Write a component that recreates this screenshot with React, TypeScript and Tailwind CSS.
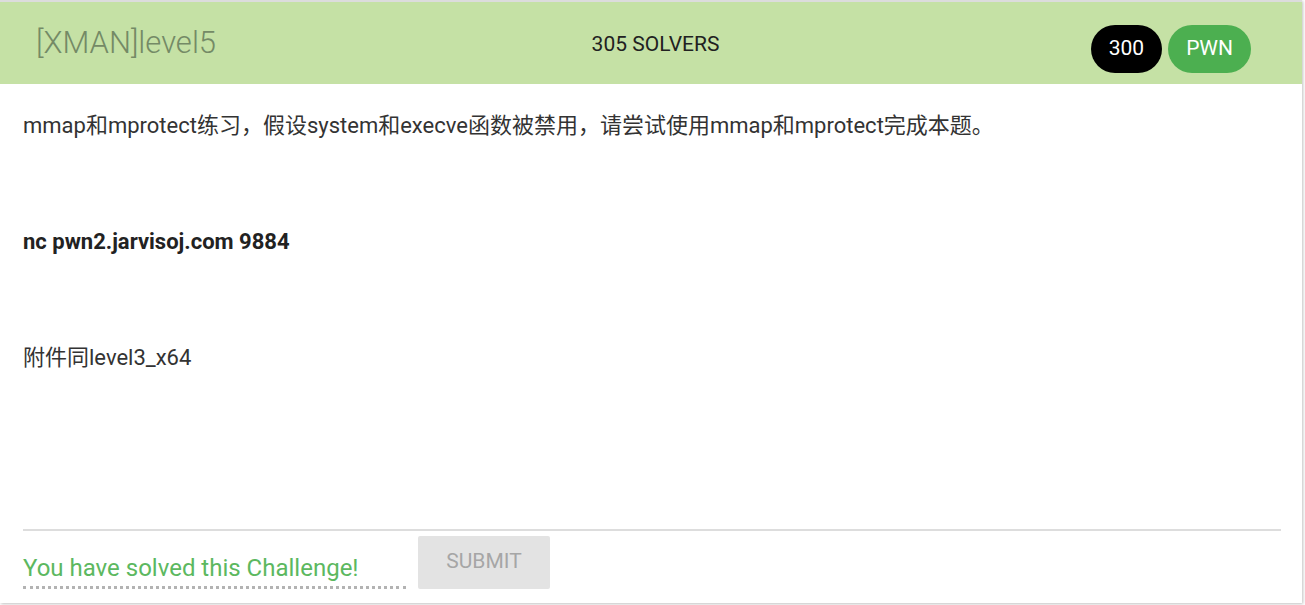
import React from 'react'

const font = { fontFamily: 'Roboto, "Noto Sans CJK SC", sans-serif' }

const App = () => {
  return (
    <div className="w-[1305px] h-[605px] bg-white" style={font}>
      <div className="w-[1302px] h-[603px] flex flex-col bg-white border-t-2 border-[#dcdcdc] shadow-[1px_1px_3px_rgba(0,0,0,0.25)]">
        <div className="h-[82px] flex items-center bg-[#c5e1a5] pl-[36px] pr-[51px]">
          <h1 className="flex-1 text-[31px] font-light text-[#748a66]">[XMAN]level5</h1>
          <div className="flex-1 text-center text-[21px] text-[#212121] pl-[24px] pt-[3px]">305 SOLVERS</div>
          <div className="flex-1 flex justify-end gap-[6px] mt-[12px]">
            <span className="h-[48px] px-[18px] flex items-center rounded-full bg-black text-white text-[21px]">300</span>
            <span className="h-[48px] px-[18px] flex items-center rounded-full bg-[#4caf50] text-white text-[21px]">PWN</span>
          </div>
        </div>
        <div className="flex-1 flex flex-col px-[23px] pr-[21px] text-[22px] text-[#333333]">
          <p className="mt-[27px] leading-[30px]">mmap和mprotect练习，假设system和execve函数被禁用，请尝试使用mmap和mprotect完成本题。</p>
          <p className="mt-[86px] leading-[30px] font-bold text-[#222222]">nc pwn2.jarvisoj.com 9884</p>
          <p className="mt-[86px] leading-[30px]">附件同level3_x64</p>
          <div className="mt-auto border-t-2 border-[#dddddd]" />
          <div className="flex items-start gap-[12px] mt-[5px] mb-[14px]">
            <div className="w-[383px] h-[53px] flex items-end pb-0 border-b-[3px] border-dotted border-[#b3b3b3] text-[24px] text-[#5cb860]">
              You have solved this Challenge!
            </div>
            <button
              type="button"
              className="w-[132px] h-[53px] rounded-[2px] bg-[#e3e3e3] text-[#a6a6a6] text-[21px] pb-[2px]"
            >
              SUBMIT
            </button>
          </div>
        </div>
      </div>
    </div>
  )
}

export default App
